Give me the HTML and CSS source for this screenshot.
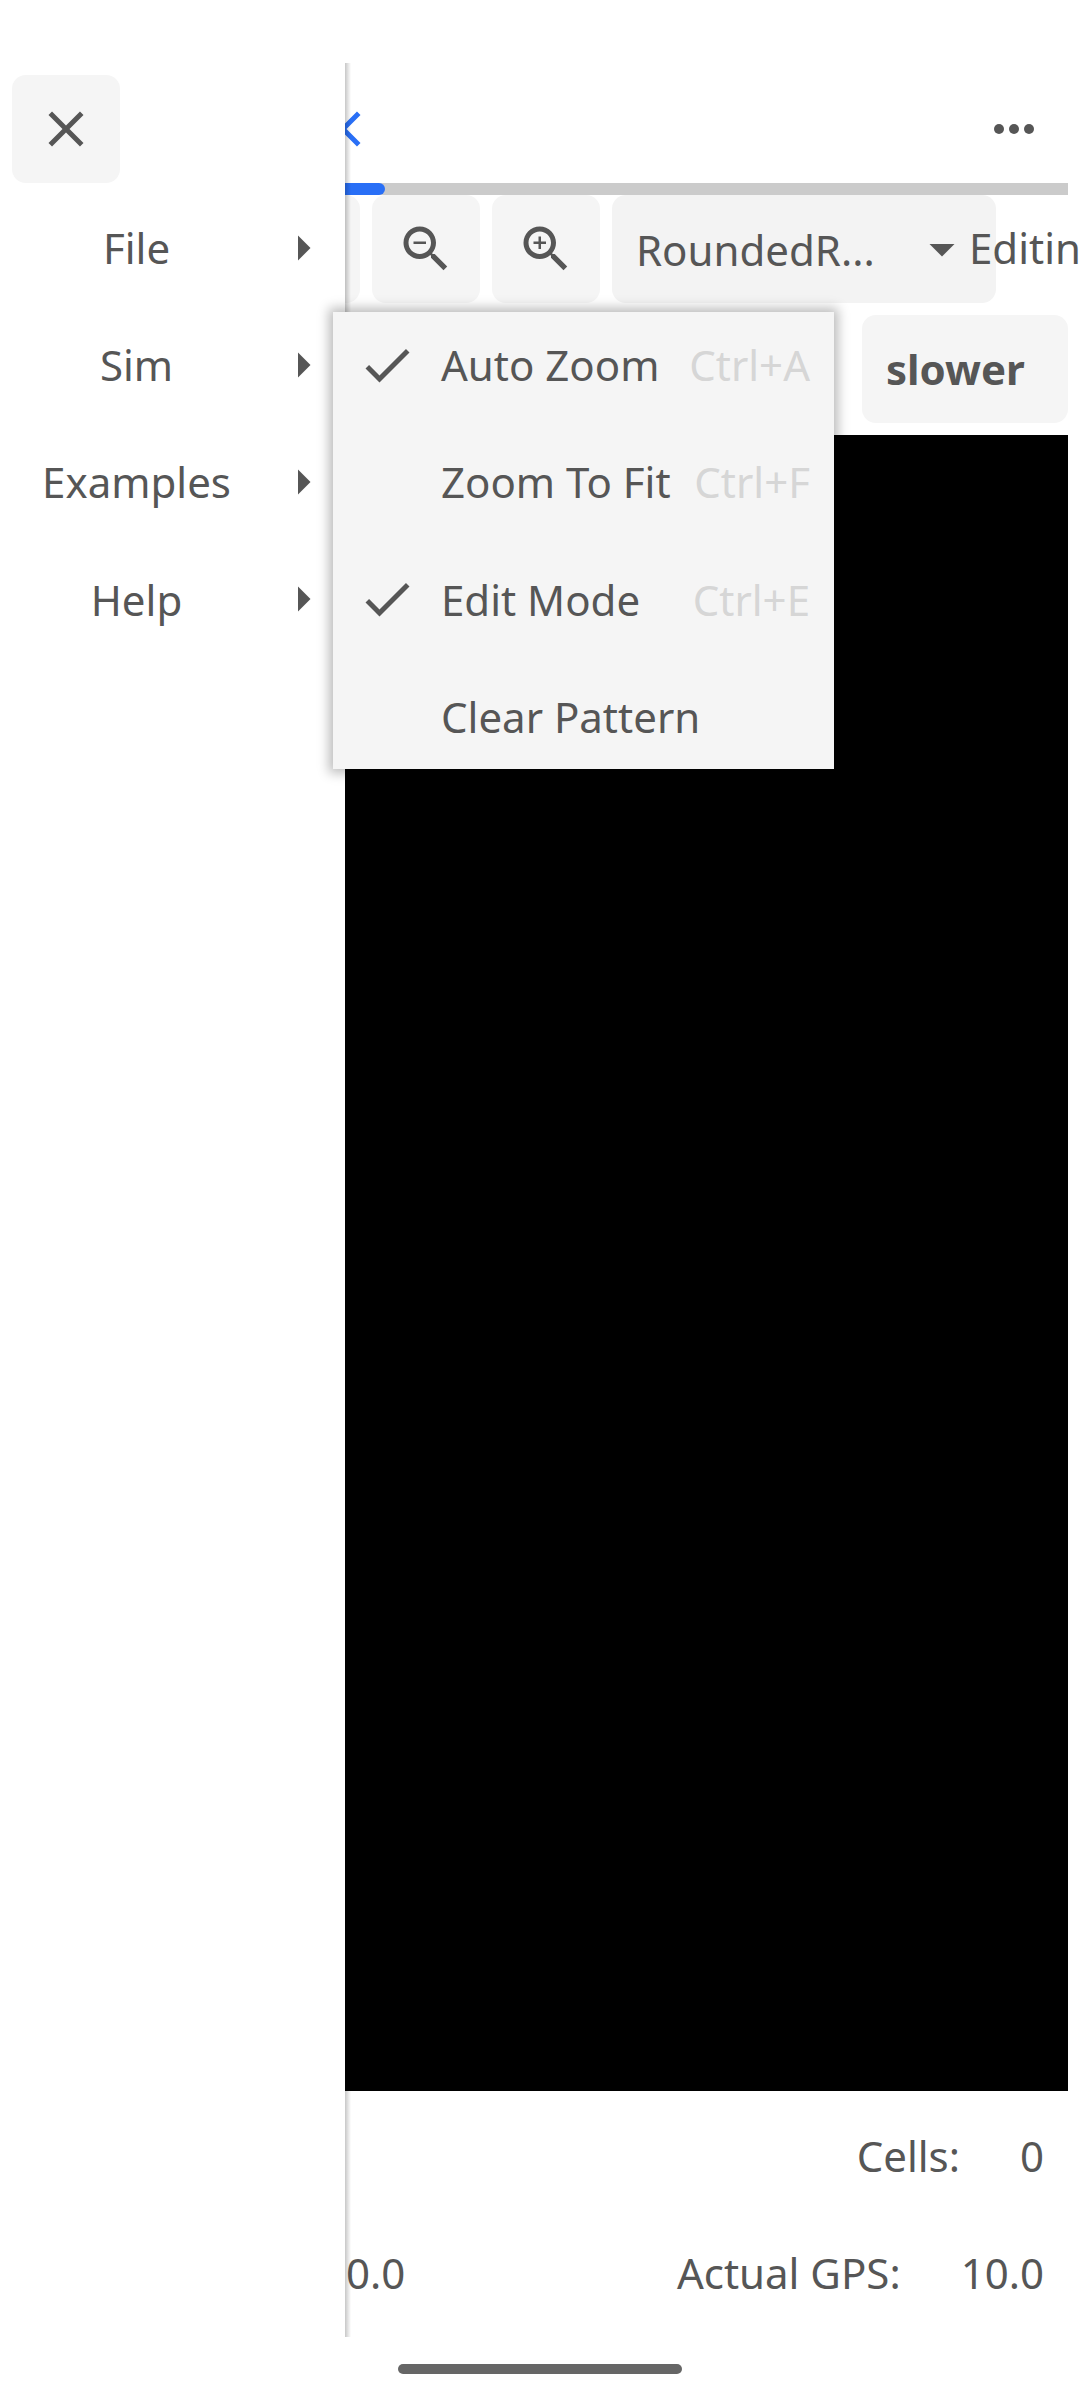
FILE: index.html
```html
<!DOCTYPE html>
<html lang="en">
<head>
<meta charset="utf-8">
<title>Life</title>
<link rel="stylesheet" href="styles.css">
</head>
<body>
<svg class="defs" width="0" height="0">
  <symbol id="close" viewBox="0 0 24 24"><path d="M19 6.41L17.59 5 12 10.59 6.41 5 5 6.41 10.59 12 5 17.59 6.41 19 12 13.41 17.59 19 19 17.59 13.41 12z"/></symbol>
  <symbol id="more" viewBox="0 0 24 24"><circle cx="6" cy="12" r="2"/><circle cx="12" cy="12" r="2"/><circle cx="18" cy="12" r="2"/></symbol>
  <symbol id="lens" viewBox="0 0 24 24"><path d="M15.5 14h-.79l-.28-.27C15.41 12.59 16 11.11 16 9.5 16 5.91 13.09 3 9.5 3S3 5.91 3 9.5 5.91 16 9.5 16c1.61 0 3.09-.59 4.23-1.57l.27.28v.79l5 4.99L20.49 19l-4.99-5zm-6 0C7.01 14 5 11.99 5 9.5S7.01 5 9.5 5 14 7.01 14 9.5 11.99 14 9.5 14z"/></symbol>
  <symbol id="check" viewBox="0 0 24 24"><path d="M9 16.17L4.83 12l-1.42 1.41L9 19 21 7l-1.41-1.41z"/></symbol>
  <symbol id="right" viewBox="0 0 24 24"><path d="M10 17l5-5-5-5v10z"/></symbol>
  <symbol id="down" viewBox="0 0 24 24"><path d="M7 10l5 5 5-5z"/></symbol>
</svg>
<div class="screen">
  <main class="main">
    <div class="tabs">
      <svg class="icon accent"><use href="#close"/></svg>
      <svg class="icon more"><use href="#more"/></svg>
    </div>
    <div class="track"><div class="indicator"></div></div>
    <div class="toolbar">
      <div class="button"></div>
      <div class="button"></div>
      <div class="button"></div>
      <div class="button"><svg class="icon" viewBox="0 0 24 24"><use href="#lens"/><path d="M7 9h5v1H7z"/></svg></div>
      <div class="button"><svg class="icon" viewBox="0 0 24 24"><use href="#lens"/><path d="M12 10h-2v2H9v-2H7V9h2V7h1v2h2v1z"/></svg></div>
      <div class="select"><span>RoundedR...</span><svg class="icon"><use href="#down"/></svg></div>
      <span class="mode">Editing</span>
    </div>
    <div class="speed"><div class="button slower">slower</div></div>
    <div class="board"></div>
    <div class="stats"><span>Cells:</span><span>0</span></div>
    <div class="stats"><span class="target">10.0</span><span>Actual GPS:</span><span>10.0</span></div>
  </main>
  <aside class="drawer">
    <div class="button"><svg class="icon"><use href="#close"/></svg></div>
    <nav class="nav">
      <div class="nav-item"><span>File</span><svg class="icon"><use href="#right"/></svg></div>
      <div class="nav-item"><span>Sim</span><svg class="icon"><use href="#right"/></svg></div>
      <div class="nav-item"><span>Examples</span><svg class="icon"><use href="#right"/></svg></div>
      <div class="nav-item"><span>Help</span><svg class="icon"><use href="#right"/></svg></div>
    </nav>
  </aside>
  <div class="menu">
    <div class="menu-item"><svg class="icon"><use href="#check"/></svg><span>Auto Zoom</span><kbd>Ctrl+A</kbd></div>
    <div class="menu-item"><svg class="icon"></svg><span>Zoom To Fit</span><kbd>Ctrl+F</kbd></div>
    <div class="menu-item"><svg class="icon"><use href="#check"/></svg><span>Edit Mode</span><kbd>Ctrl+E</kbd></div>
    <div class="menu-item"><svg class="icon"></svg><span>Clear Pattern</span></div>
  </div>
  <div class="home-bar"></div>
</div>
</body>
</html>
```
FILE: styles.css
```css
* { box-sizing: border-box; }
body {
  margin: 0;
  background: #fff;
  color: #565656;
  font: 42px/57px "Noto Sans", sans-serif;
  white-space: nowrap;
}
.defs { position: absolute; }
.screen {
  position: relative;
  width: 1080px;
  height: 2400px;
  padding-top: 63px;
  overflow: hidden;
}
.icon {
  display: block;
  flex: none;
  width: 60px;
  height: 60px;
  fill: #565656;
}
.accent { fill: #296ff6; }
.button {
  display: flex;
  flex: none;
  align-items: center;
  justify-content: center;
  width: 108px;
  height: 108px;
  border-radius: 14px;
  background: #f5f5f5;
}

.main {
  display: flex;
  flex-direction: column;
  padding: 0 12px;
}
.tabs {
  display: flex;
  align-items: center;
  justify-content: space-between;
  height: 120px;
  padding: 12px 24px 0 301px;
}
.track { height: 12px; background: #cbcbcb; }
.indicator {
  width: 372.5px;
  height: 12px;
  border-radius: 6px;
  background: #296ff6;
}
.toolbar { display: flex; gap: 12px; height: 108px; }
.select {
  display: flex;
  flex: none;
  align-items: center;
  justify-content: space-between;
  width: 384px;
  padding: 0 24px;
  border-radius: 14px;
  background: #f3f3f3;
}
.mode { margin: 24px 0 0 -39px; }
.speed {
  display: flex;
  justify-content: flex-end;
  padding: 12px 0;
}
.slower {
  justify-content: flex-start;
  width: 206px;
  padding: 0 0 2px 24px;
  font-weight: 700;
}
.board { height: 1656px; background: #000; }
.stats {
  display: flex;
  justify-content: flex-end;
  gap: 60px;
  margin-top: 12px;
  padding: 24px;
}
.target { margin-left: 286px; margin-right: auto; }

.drawer {
  position: absolute;
  top: 63px;
  left: 0;
  width: 345px;
  height: 2274px;
  padding: 12px 12px 0;
  background: #fff;
}
.drawer::after {
  content: "";
  position: absolute;
  top: 0;
  left: 100%;
  width: 6px;
  height: 100%;
  background: linear-gradient(to right, rgba(0, 0, 0, .22), transparent);
}
.nav {
  display: flex;
  flex-direction: column;
  gap: 12.2px;
  margin: 12px 0 0 -12px;
}
.nav-item {
  display: flex;
  align-items: center;
  height: 105px;
}
.nav-item span { flex: 1; text-align: center; }

.menu {
  position: absolute;
  top: 312px;
  left: 333px;
  display: flex;
  flex-direction: column;
  gap: 12.3px;
  width: 501px;
  height: 457px;
  background: #f5f5f5;
  box-shadow: 0 0 11px 4px rgba(0, 0, 0, .27);
}
.menu-item {
  display: flex;
  flex: none;
  align-items: center;
  height: 105px;
  padding: 0 24px;
}
.menu-item span { margin-left: 24px; }
.menu-item kbd {
  margin-left: auto;
  color: #d6d6d6;
  font: inherit;
}
.home-bar {
  position: absolute;
  left: 398px;
  bottom: 26px;
  width: 284px;
  height: 10px;
  border-radius: 5px;
  background: #666;
}
```
